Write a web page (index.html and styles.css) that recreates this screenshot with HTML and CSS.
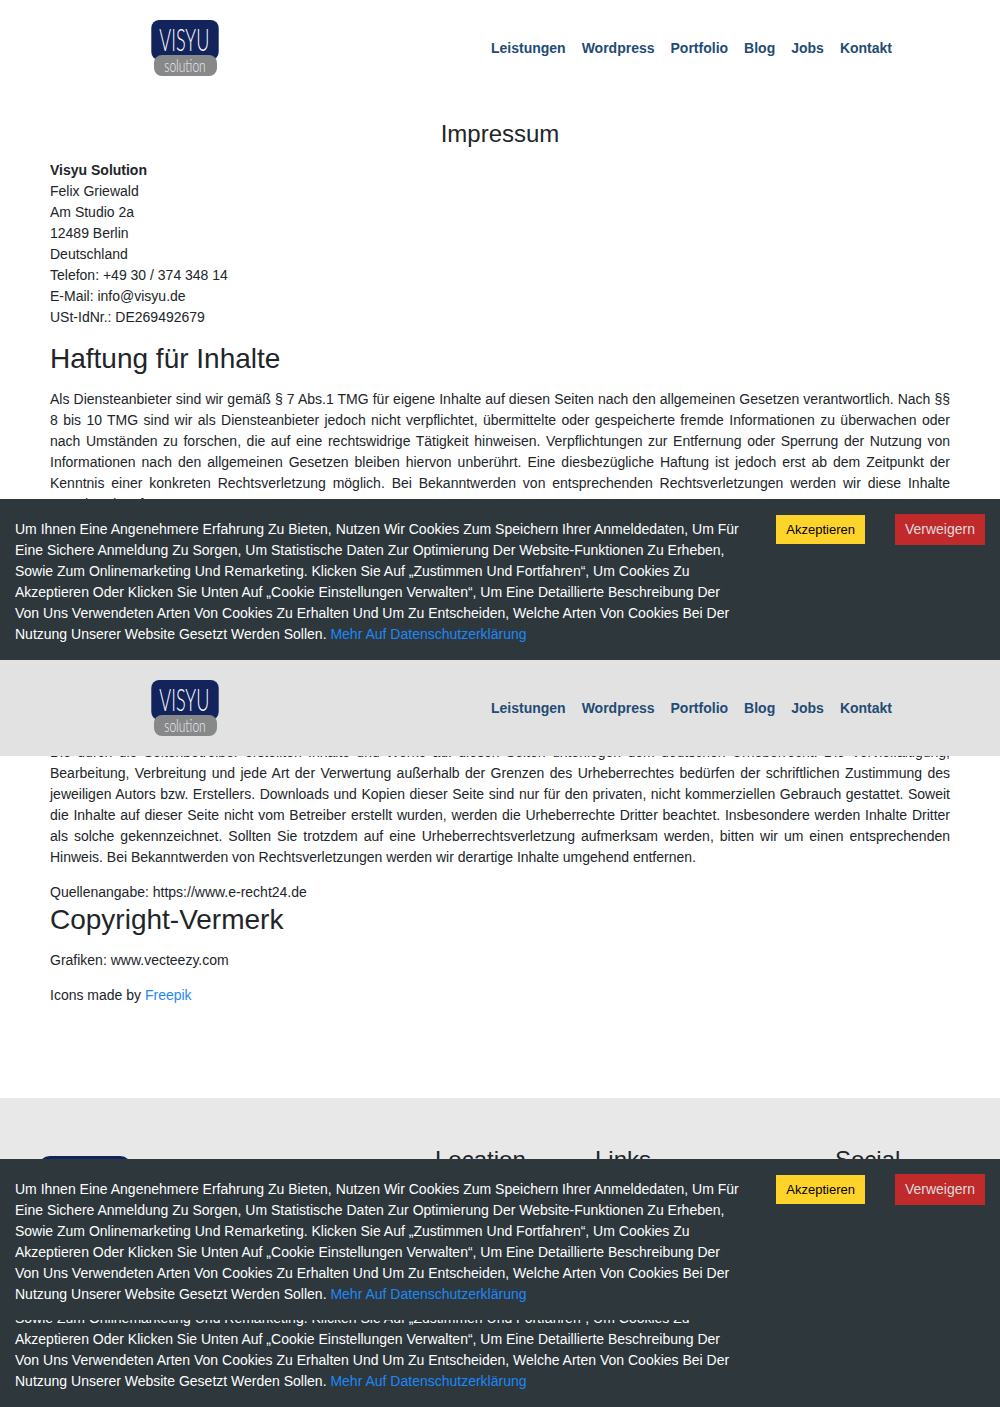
FILE: index.html
```html
<!DOCTYPE html>
<html lang="de">
<head>
<meta charset="utf-8">
<title>Impressum – Visyu Solution</title>
<link rel="stylesheet" href="styles.css">
</head>
<body>
<svg class="defs" aria-hidden="true">
  <symbol id="logo" viewBox="0 0 68 56">
    <rect x="0.3" y="0" width="67.4" height="40" rx="8" fill="#13235b"/>
    <rect x="3" y="35" width="63" height="21" rx="8" fill="#87888a"/>
    <text class="logo-name" x="8.3" y="30.8" textLength="50" lengthAdjust="spacingAndGlyphs">VISYU</text>
    <text class="logo-sub" x="13.3" y="52" textLength="41.4" lengthAdjust="spacingAndGlyphs">solution</text>
  </symbol>
</svg>

<section class="view view-first">
  <header class="header">
    <a class="brand"><svg class="logo"><use href="#logo"/></svg></a>
    <nav class="nav"><a>Leistungen</a><a>Wordpress</a><a>Portfolio</a><a>Blog</a><a>Jobs</a><a>Kontakt</a></nav>
  </header>
  <main class="content">
    <h1 class="title">Impressum</h1>
    <p><strong>Visyu Solution</strong><br>Felix Griewald<br>Am Studio 2a<br>12489 Berlin<br>Deutschland<br>Telefon: +49 30 / 374 348 14<br>E-Mail: info@visyu.de<br>USt-IdNr.: DE269492679</p>
    <h2>Haftung für Inhalte</h2>
    <p>Als Diensteanbieter sind wir gemäß § 7 Abs.1 TMG für eigene Inhalte auf diesen Seiten nach den allgemeinen Gesetzen verantwortlich. Nach §§ 8 bis 10 TMG sind wir als Diensteanbieter jedoch nicht verpflichtet, übermittelte oder gespeicherte fremde Informationen zu überwachen oder nach Umständen zu forschen, die auf eine rechtswidrige Tätigkeit hinweisen. Verpflichtungen zur Entfernung oder Sperrung der Nutzung von Informationen nach den allgemeinen Gesetzen bleiben hiervon unberührt. Eine diesbezügliche Haftung ist jedoch erst ab dem Zeitpunkt der Kenntnis einer konkreten Rechtsverletzung möglich. Bei Bekanntwerden von entsprechenden Rechtsverletzungen werden wir diese Inhalte umgehend entfernen.</p>
  </main>
</section>

<aside class="cookie">
  <p class="cookie-text">Um Ihnen Eine Angenehmere Erfahrung Zu Bieten, Nutzen Wir Cookies Zum Speichern Ihrer Anmeldedaten, Um Für Eine Sichere Anmeldung Zu Sorgen, Um Statistische Daten Zur Optimierung Der Website-Funktionen Zu Erheben, Sowie Zum Onlinemarketing Und Remarketing. Klicken Sie Auf „Zustimmen Und Fortfahren“, Um Cookies Zu Akzeptieren Oder Klicken Sie Unten Auf „Cookie Einstellungen Verwalten“, Um Eine Detaillierte Beschreibung Der Von Uns Verwendeten Arten Von Cookies Zu Erhalten Und Um Zu Entscheiden, Welche Arten Von Cookies Bei Der Nutzung Unserer Website Gesetzt Werden Sollen. <a class="link">Mehr Auf Datenschutzerklärung</a></p>
  <div class="cookie-actions"><button class="accept">Akzeptieren</button><a class="deny">Verweigern</a></div>
</aside>

<header class="header header-scrolled">
  <a class="brand"><svg class="logo"><use href="#logo"/></svg></a>
  <nav class="nav"><a>Leistungen</a><a>Wordpress</a><a>Portfolio</a><a>Blog</a><a>Jobs</a><a>Kontakt</a></nav>
</header>

<section class="view view-second">
  <div class="content content-end">
    <p>Die durch die Seitenbetreiber erstellten Inhalte und Werke auf diesen Seiten unterliegen dem deutschen Urheberrecht. Die Vervielfältigung, Bearbeitung, Verbreitung und jede Art der Verwertung außerhalb der Grenzen des Urheberrechtes bedürfen der schriftlichen Zustimmung des jeweiligen Autors bzw. Erstellers. Downloads und Kopien dieser Seite sind nur für den privaten, nicht kommerziellen Gebrauch gestattet. Soweit die Inhalte auf dieser Seite nicht vom Betreiber erstellt wurden, werden die Urheberrechte Dritter beachtet. Insbesondere werden Inhalte Dritter als solche gekennzeichnet. Sollten Sie trotzdem auf eine Urheberrechtsverletzung aufmerksam werden, bitten wir um einen entsprechenden Hinweis. Bei Bekanntwerden von Rechtsverletzungen werden wir derartige Inhalte umgehend entfernen.</p>
    <p class="source">Quellenangabe: https://www.e-recht24.de</p>
    <h2>Copyright-Vermerk</h2>
    <p>Grafiken: www.vecteezy.com</p>
    <p>Icons made by <a class="link">Freepik</a></p>
  </div>
</section>

<footer class="footer">
  <div class="footer-brand"><svg class="footer-logo"><use href="#logo"/></svg></div>
  <h3>Location</h3>
  <h3>Links</h3>
  <h3>Social</h3>
</footer>

<aside class="cookie">
  <p class="cookie-text">Um Ihnen Eine Angenehmere Erfahrung Zu Bieten, Nutzen Wir Cookies Zum Speichern Ihrer Anmeldedaten, Um Für Eine Sichere Anmeldung Zu Sorgen, Um Statistische Daten Zur Optimierung Der Website-Funktionen Zu Erheben, Sowie Zum Onlinemarketing Und Remarketing. Klicken Sie Auf „Zustimmen Und Fortfahren“, Um Cookies Zu Akzeptieren Oder Klicken Sie Unten Auf „Cookie Einstellungen Verwalten“, Um Eine Detaillierte Beschreibung Der Von Uns Verwendeten Arten Von Cookies Zu Erhalten Und Um Zu Entscheiden, Welche Arten Von Cookies Bei Der Nutzung Unserer Website Gesetzt Werden Sollen. <a class="link">Mehr Auf Datenschutzerklärung</a></p>
  <div class="cookie-actions"><button class="accept">Akzeptieren</button><a class="deny">Verweigern</a></div>
</aside>

<aside class="cookie cookie-tail">
  <p class="cookie-text">Sowie Zum Onlinemarketing Und Remarketing. Klicken Sie Auf „Zustimmen Und Fortfahren“, Um Cookies Zu Akzeptieren Oder Klicken Sie Unten Auf „Cookie Einstellungen Verwalten“, Um Eine Detaillierte Beschreibung Der Von Uns Verwendeten Arten Von Cookies Zu Erhalten Und Um Zu Entscheiden, Welche Arten Von Cookies Bei Der Nutzung Unserer Website Gesetzt Werden Sollen. <a class="link">Mehr Auf Datenschutzerklärung</a></p>
</aside>
</body>
</html>
```
FILE: styles.css
```css
* { box-sizing: border-box; }

body {
  margin: 0;
  background: #fff;
  color: #212529;
  font: 14px/21px "Liberation Sans", Arial, sans-serif;
}

h1, h2, h3, p { margin: 0; font-weight: 400; }

.defs { display: none; }

.logo-name {
  font: 300 31.5px Lato, sans-serif;
  fill: #fff;
}

.logo-sub {
  font: 300 18px Lato, sans-serif;
  fill: #f0f0f0;
}

.view { overflow: hidden; }
.view-first { height: 499px; }

.view-second {
  display: flex;
  align-items: flex-end;
  height: 342px;
}

.header {
  display: flex;
  justify-content: space-between;
  align-items: center;
  height: 96px;
  padding: 0 108px 0 151px;
}

.header-scrolled { background: #e2e2e2; }

.brand { display: flex; }
.logo { width: 68px; height: 56px; }

.nav {
  display: flex;
  gap: 16px;
  color: #224b75;
  font-weight: 700;
}

.content {
  padding: 23px 50px 0;
  text-align: justify;
}

.content p { margin-bottom: 14px; }

.content h2 {
  margin-bottom: 14px;
  font-size: 28px;
  line-height: 33px;
}

.content .title {
  margin-bottom: 12px;
  font-size: 24px;
  line-height: 29px;
  text-align: center;
}

.content-end { padding-bottom: 78px; }
.content .source { margin-bottom: 0; }

.link { color: #1e88f7; }

.cookie {
  display: flex;
  justify-content: space-between;
  align-items: flex-start;
  height: 161px;
  padding: 15px;
  background: #2d373c;
  color: #fff;
}

.cookie-text {
  width: 728px;
  padding-top: 5px;
}

.cookie-actions {
  display: flex;
  align-items: center;
  gap: 30px;
}

.accept {
  height: 29px;
  padding: 0 10px;
  border: 0;
  background: #ffd42a;
  color: #000;
  font: 13px "Liberation Sans", Arial, sans-serif;
}

.deny {
  padding: 5px 10px;
  background: #c12a2a;
  color: #ddd;
}

.cookie-tail {
  align-items: flex-end;
  height: 87px;
  overflow: hidden;
}

.footer {
  display: grid;
  grid-template-columns: 397px 160px 240px 1fr;
  height: 61px;
  padding: 47px 38px 0;
  overflow: hidden;
  background: #e8e8e8;
}

.footer h3 {
  font-size: 24px;
  line-height: 29px;
}

.footer-brand { padding-top: 11px; }
.footer-logo { width: 94px; height: 77px; }
```
